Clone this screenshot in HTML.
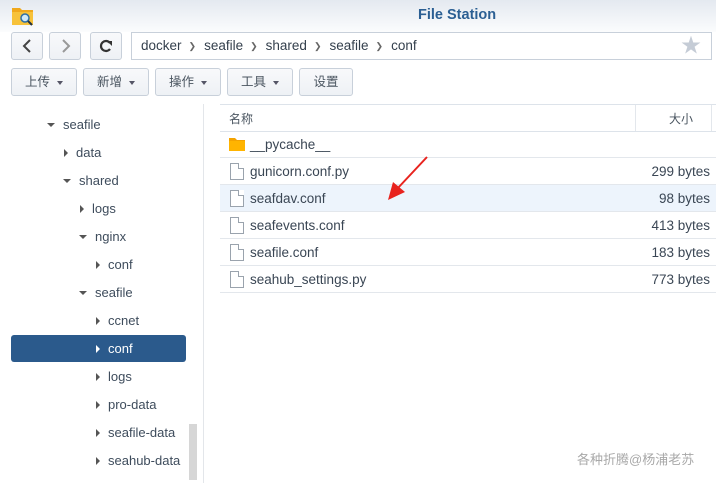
<!DOCTYPE html>
<html><head><meta charset="utf-8"><style>
*{box-sizing:border-box;margin:0;padding:0}
body{width:716px;height:483px;overflow:hidden;background:#fff;font-family:"Liberation Sans","Noto Sans CJK SC",sans-serif;color:#404a55;position:relative;font-size:13px}
.hdr{position:absolute;left:0;top:0;width:716px;height:32px;background:linear-gradient(#e4e9f0,#fbfcfd)}
.title{position:absolute;left:418px;top:7px;font-weight:bold;font-size:14.5px;color:#2b5f93}
.btn{position:absolute;border:1px solid #c8d0da;border-radius:3px;background:linear-gradient(#f8f9fb,#eef1f5);height:28px}
.tb{top:68px;height:28px;font-size:12.5px;color:#4a5560;text-align:center;line-height:27px}
.caret{display:inline-block;width:0;height:0;border-left:3.5px solid transparent;border-right:3.5px solid transparent;border-top:4px solid #556;margin-left:7px;vertical-align:middle}
.path{position:absolute;left:131px;top:32px;width:581px;height:28px;border:1px solid #c8d0da;background:#fff;line-height:26px;padding-left:9px;font-size:13.5px;color:#333f4c}
.sep{color:#666;margin:0 8px 0 7px;font-size:9px;vertical-align:1px}
.tree div{position:absolute;height:28px;line-height:30px;font-size:13px;color:#3e4c5c}
.r{display:inline-block;width:0;height:0;border-top:4px solid transparent;border-bottom:4px solid transparent;border-left:4px solid #555;margin-right:8px;vertical-align:0}
.d{display:inline-block;width:0;height:0;border-left:4px solid transparent;border-right:4px solid transparent;border-top:4px solid #555;margin-right:8px;vertical-align:2px}
.row{position:absolute;left:220px;width:496px;height:27px;border-bottom:1px solid #e3e7ec;line-height:28px;font-size:13.5px;color:#3a4654}
.row .n{position:absolute;left:30px}
.row .s{position:absolute;right:6px}
.fi{position:absolute;left:10px;top:5px;width:14px;height:17px;border:1px solid #9aa3ad;background:#fff}
.fi:after{content:"";position:absolute;right:-1px;top:-1px;width:5px;height:5px;background:#fff;border-left:1px solid #9aa3ad;border-bottom:1px solid #9aa3ad}
</style></head><body>
<div class="hdr"></div>
<svg style="position:absolute;left:11px;top:5px" width="24" height="21"><path d="M1 3h8l2 2h11v15H1z" fill="#f0a81c"/><rect x="1" y="7" width="21" height="13" fill="#f7c23a"/><circle cx="14" cy="13" r="4" fill="#cfe9f8" stroke="#2d6fa6" stroke-width="1.5"/><path d="M17 16l4 4" stroke="#234" stroke-width="2"/></svg>
<div class="title">File Station</div>
<div class="btn" style="left:11px;top:32px;width:32px"><svg width="30" height="26"><path d="M18 7l-6 6 6 6" stroke="#444" stroke-width="2" fill="none"/></svg></div>
<div class="btn" style="left:49px;top:32px;width:32px"><svg width="30" height="26"><path d="M13 7l6 6-6 6" stroke="#999" stroke-width="2" fill="none"/></svg></div>
<div class="btn" style="left:90px;top:32px;width:32px"><svg width="30" height="26"><path d="M19 10a5 5 0 1 0 0 6" stroke="#333" stroke-width="2.2" fill="none"/><path d="M16 8h5v5z" fill="#333"/></svg></div>
<div class="path">docker<span class="sep">❯</span>seafile<span class="sep">❯</span>shared<span class="sep">❯</span>seafile<span class="sep">❯</span>conf<span style="position:absolute;right:10px;top:0;color:#c5ccd6;font-size:20px">★</span></div>
<div class="btn tb" style="left:11px;width:66px">上传<span class="caret"></span></div>
<div class="btn tb" style="left:83px;width:66px">新增<span class="caret"></span></div>
<div class="btn tb" style="left:155px;width:66px">操作<span class="caret"></span></div>
<div class="btn tb" style="left:227px;width:66px">工具<span class="caret"></span></div>
<div class="btn tb" style="left:299px;width:54px">设置</div>
<div style="position:absolute;left:203px;top:104px;width:1px;height:379px;background:#e3e6ea"></div>
<div style="position:absolute;left:189px;top:424px;width:8px;height:56px;background:#d6d6d6"></div>
<div style="position:absolute;left:11px;top:335px;width:175px;height:27px;background:#2b5a8c;border-radius:3px"></div>
<div class="tree">
<div style="left:47px;top:110px"><span class="d"></span>seafile</div>
<div style="left:64px;top:138px"><span class="r"></span>data</div>
<div style="left:63px;top:166px"><span class="d"></span>shared</div>
<div style="left:80px;top:194px"><span class="r"></span>logs</div>
<div style="left:79px;top:222px"><span class="d"></span>nginx</div>
<div style="left:96px;top:250px"><span class="r"></span>conf</div>
<div style="left:79px;top:278px"><span class="d"></span>seafile</div>
<div style="left:96px;top:306px"><span class="r"></span>ccnet</div>
<div style="left:96px;top:334px;color:#fff"><span class="r" style="border-left-color:#fff"></span>conf</div>
<div style="left:96px;top:362px"><span class="r"></span>logs</div>
<div style="left:96px;top:390px"><span class="r"></span>pro-data</div>
<div style="left:96px;top:418px"><span class="r"></span>seafile-data</div>
<div style="left:96px;top:446px"><span class="r"></span>seahub-data</div>
</div>
<div style="position:absolute;left:220px;top:104px;width:496px;height:28px;border-top:1px solid #dde3ea;border-bottom:1px solid #dde3ea"></div>
<div style="position:absolute;left:635px;top:105px;width:1px;height:26px;background:#e3e7ec"></div>
<div style="position:absolute;left:711px;top:105px;width:1px;height:26px;background:#e3e7ec"></div>
<div style="position:absolute;left:229px;top:110px;font-size:12px;color:#4a5560">名称</div>
<div style="position:absolute;left:669px;top:110px;font-size:12px;color:#4a5560">大小</div>
<div class="row" style="top:131px"><svg style="position:absolute;left:9px;top:6px" width="16" height="14"><path d="M0 1h6l2 2h8v11H0z" fill="#f4a300"/><rect y="4" width="16" height="10" fill="#ffb400"/></svg><span class="n">__pycache__</span></div>
<div class="row" style="top:158px"><div class="fi"></div><span class="n">gunicorn.conf.py</span><span class="s">299 bytes</span></div>
<div class="row" style="top:185px;background:#edf4fc"><div class="fi"></div><span class="n">seafdav.conf</span><span class="s">98 bytes</span></div>
<div class="row" style="top:212px"><div class="fi"></div><span class="n">seafevents.conf</span><span class="s">413 bytes</span></div>
<div class="row" style="top:239px"><div class="fi"></div><span class="n">seafile.conf</span><span class="s">183 bytes</span></div>
<div class="row" style="top:266px"><div class="fi"></div><span class="n">seahub_settings.py</span><span class="s">773 bytes</span></div>
<svg style="position:absolute;left:385px;top:155px" width="45" height="48"><path d="M42 2L12 34" stroke="#e8231e" stroke-width="2"/><path d="M3 45L8 27L20 37z" fill="#e8231e"/></svg>
<div style="position:absolute;left:577px;top:449px;font-size:13px;color:#a8a8a8">各种折腾@杨浦老苏</div>
</body></html>
